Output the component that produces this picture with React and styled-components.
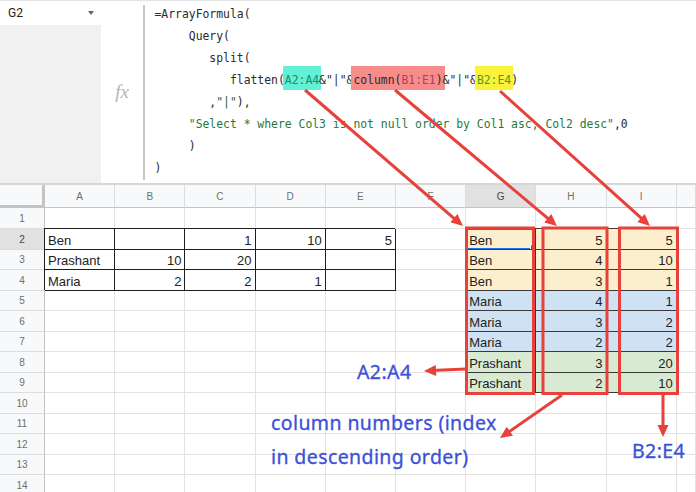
import React from "react";
import styled, { createGlobalStyle } from "styled-components";

const GlobalStyle = createGlobalStyle`
  html, body { margin: 0; padding: 0; background: #fff; overflow: hidden; }
  body { font-family: "Liberation Sans", Arial, sans-serif; }
`;

const Page = styled.div`
  position: relative;
  width: 696px;
  height: 492px;
  overflow: hidden;
  background: #fff;
`;

const FormulaBar = styled.div`
  display: flex;
  height: 183px;
  box-sizing: border-box;
  border-top: 1px solid #e3e3e3;
`;

const NameCol = styled.div`
  width: 101px;
  display: flex;
  flex-direction: column;
  background: #f1f1f1;
`;

const NameBox = styled.div`
  height: 24px;
  background: #fff;
  display: flex;
  align-items: center;
  justify-content: space-between;
  padding: 0 7px 0 8px;
  font-family: Roboto, "Liberation Sans", sans-serif;
  font-size: 12px;
  color: #222;
`;

const Caret = styled.span`
  width: 0;
  height: 0;
  border-left: 3.5px solid transparent;
  border-right: 3.5px solid transparent;
  border-top: 4px solid #666;
`;

const FxCell = styled.div`
  width: 42px;
  display: flex;
  align-items: center;
  justify-content: center;
  font-family: "Liberation Serif", serif;
  font-style: italic;
  font-size: 19px;
  color: #b4b4b4;
  padding-bottom: 1px;
`;

const Divider = styled.div`
  width: 1.5px;
  background: #c6c6c6;
  margin: 4px 0 3px;
`;

const FormulaText = styled.div`
  padding: 2px 0 0 10px;
  font-family: "DejaVu Sans Mono", monospace;
  font-size: 11.4px;
  line-height: 22px;
  white-space: pre;
  color: #2b2b2b;
`;

const Str = styled.span`
  color: ${(p) => p.$c || "#1f7a3c"};
`;

const Hl = styled.span`
  background: ${(p) => p.$bg};
  padding: 7px 2px 3px;
  margin: 0 -2px;
`;

const BarDivider = styled.div`
  height: 2px;
  background: #d6d6d6;
`;

const Grid = styled.div`
  display: grid;
  grid-template-columns: 45px repeat(9, 70.2px) 1fr;
  grid-template-rows: 23.3px 21px repeat(13, 20.5px);
`;

const Corner = styled.div`
  background: #f8f9fa;
  border-right: 3px solid #c4c4c4;
  border-bottom: 3px solid #c4c4c4;
`;

const HeadCell = styled.div`
  background: ${(p) => (p.$sel ? "#e1e1e1" : "#f8f9fa")};
  border-right: 1px solid #dcdcdc;
  border-bottom: 1px solid #c4c4c4;
  display: flex;
  align-items: center;
  justify-content: center;
  font-family: "Liberation Sans", Arial, sans-serif;
  font-size: 10px;
  color: ${(p) => (p.$sel ? "#444" : "#6f6f6f")};
`;

const RowHead = styled.div`
  background: ${(p) => (p.$sel ? "#e1e1e1" : "#f8f9fa")};
  border-right: 1px solid #c4c4c4;
  border-bottom: 1px solid #dcdcdc;
  display: flex;
  align-items: center;
  justify-content: center;
  font-family: "Liberation Sans", Arial, sans-serif;
  font-size: 10px;
  color: ${(p) => (p.$sel ? "#444" : "#6f6f6f")};
`;

const Cell = styled.div`
  position: relative;
  box-sizing: border-box;
  background: ${(p) => p.$bg || "transparent"};
  border-right: 1px solid ${(p) => p.$line || "#e2e2e2"};
  border-bottom: 1px solid ${(p) => p.$line || "#e2e2e2"};
  box-shadow: ${(p) => (p.$line ? `-1px -1px 0 0 ${p.$line}` : "none")};
  display: flex;
  align-items: flex-end;
  justify-content: ${(p) => (p.$num ? "flex-end" : "flex-start")};
  padding: 0 3px 1px 3px;
  font-family: "Liberation Sans", Arial, sans-serif;
  font-size: 13px;
  color: #222;
  white-space: nowrap;
`;

const Selection = styled.div`
  position: absolute;
  left: -1px;
  top: -1px;
  right: -1px;
  bottom: -1px;
  border: 2px solid #1a73e8;
`;

const Handle = styled.div`
  position: absolute;
  right: -4px;
  bottom: -4px;
  width: 6px;
  height: 6px;
  background: #1a73e8;
  border: 1px solid #fff;
`;

const Overlay = styled.div`
  position: absolute;
  inset: 0;
  pointer-events: none;
`;

const Drawing = styled.svg`
  position: absolute;
  left: 0;
  top: 0;
`;

const Note = styled.div`
  position: absolute;
  left: ${(p) => p.$x}px;
  top: ${(p) => p.$y}px;
  font-family: "Noto Sans", "DejaVu Sans", sans-serif;
  font-size: 19.5px;
  line-height: 34px;
  color: #3b50d8;
  white-space: pre;
  letter-spacing: 0.4px;
  -webkit-text-stroke: 0.3px #3b50d8;
`;

const COLS = ["A", "B", "C", "D", "E", "F", "G", "H", "I", ""];

const LEFT = {
  2: ["Ben", "", 1, 10, 5],
  3: ["Prashant", 10, 20, "", ""],
  4: ["Maria", 2, 2, 1, ""],
};

const RIGHT = [
  ["Ben", 5, 5],
  ["Ben", 4, 10],
  ["Ben", 3, 1],
  ["Maria", 4, 1],
  ["Maria", 3, 2],
  ["Maria", 2, 2],
  ["Prashant", 3, 20],
  ["Prashant", 2, 10],
];

const fillFor = (r) => (r <= 4 ? "#fcefcd" : r <= 7 ? "#cfe2f3" : "#d9ead3");

function cellProps(r, c) {
  if (LEFT[r] && c <= 4) {
    const v = LEFT[r][c];
    return { v, num: c > 0, line: "#1e1e1e" };
  }
  if (r >= 2 && r <= 9 && c >= 6 && c <= 8) {
    const v = RIGHT[r - 2][c - 6];
    return { v, num: c > 6, line: "#3a3a3a", bg: fillFor(r) };
  }
  return { v: "" };
}

const RED = "#e8403b";

function Arrow({ x1, y1, x2, y2 }) {
  const dx = x2 - x1;
  const dy = y2 - y1;
  const len = Math.hypot(dx, dy);
  const ux = dx / len;
  const uy = dy / len;
  const nx = -uy;
  const ny = ux;
  const hl = 12;
  const hw = 5.5;
  const bx = x2 - ux * hl;
  const by = y2 - uy * hl;
  const ex = x2 - ux * 8;
  const ey = y2 - uy * 8;
  return (
    <g>
      <line x1={x1} y1={y1} x2={ex} y2={ey} stroke={RED} strokeWidth="3" />
      <polygon
        points={`${x2},${y2} ${bx + nx * hw},${by + ny * hw} ${bx - nx * hw},${by - ny * hw}`}
        fill={RED}
      />
    </g>
  );
}

export default function App() {
  const rows = [];
  for (let r = 1; r <= 14; r++) {
    rows.push(
      <RowHead key={`rh${r}`} $sel={r === 2}>
        {r}
      </RowHead>
    );
    COLS.forEach((_, c) => {
      const p = cellProps(r, c);
      rows.push(
        <Cell key={`c${r}-${c}`} $num={p.num} $line={p.line} $bg={p.bg}>
          {p.v}
          {r === 2 && c === 6 && (
            <Selection>
              <Handle />
            </Selection>
          )}
        </Cell>
      );
    });
  }

  return (
    <Page>
      <GlobalStyle />
      <FormulaBar>
        <NameCol>
          <NameBox>
            G2
            <Caret />
          </NameBox>
        </NameCol>
        <FxCell>fx</FxCell>
        <Divider />
        <FormulaText>
          {"=ArrayFormula(\n"}
          {"     Query(\n"}
          {"        split(\n"}
          {"           flatten("}
          <Hl $bg="#62f0d6">
            <Str $c="#1c8a6a">A2:A4</Str>
          </Hl>
          {"&"}
          <Str $c="#2b2b2b">"|"</Str>
          {"&"}
          <Hl $bg="#f78d8a">
            column(<Str $c="#a9416e">B1:E1</Str>)
          </Hl>
          {"&"}
          <Str $c="#2b2b2b">"|"</Str>
          {"&"}
          <Hl $bg="#fbf33a">
            <Str $c="#4f9a28">B2:E4</Str>
          </Hl>
          {")\n"}
          {"        ,"}
          <Str $c="#2f5f3c">"|"</Str>
          {"),\n"}
          {"     "}
          <Str>"Select * where Col3 is not null order by Col1 asc, Col2 desc"</Str>
          {",0\n"}
          {"     )\n"}
          {")"}
        </FormulaText>
      </FormulaBar>
      <BarDivider />
      <Grid>
        <Corner />
        {COLS.map((l, i) => (
          <HeadCell key={`h${i}`} $sel={l === "G"}>
            {l}
          </HeadCell>
        ))}
        {rows}
      </Grid>
      <Overlay>
        <Drawing width="696" height="492" viewBox="0 0 696 492">
          <rect x="466.5" y="228" width="67" height="165.5" fill="none" stroke={RED} strokeWidth="3" />
          <rect x="543" y="228" width="64" height="165.5" fill="none" stroke={RED} strokeWidth="3" />
          <rect x="619.5" y="228" width="58" height="165.5" fill="none" stroke={RED} strokeWidth="3" />
          <Arrow x1={305} y1={90} x2={463} y2={226} />
          <Arrow x1={395} y1={90} x2={557} y2={226} />
          <Arrow x1={500} y1={91} x2={650} y2={226} />
          <Arrow x1={466} y1={369} x2={424} y2={371} />
          <Arrow x1={562} y1={395} x2={500} y2={438} />
          <Arrow x1={663} y1={395} x2={663} y2={437} />
        </Drawing>
        <Note $x={357} $y={355}>A2:A4</Note>
        <Note $x={271} $y={406}>{"column numbers (index\nin descending order)"}</Note>
        <Note $x={632} $y={434}>B2:E4</Note>
      </Overlay>
    </Page>
  );
}
